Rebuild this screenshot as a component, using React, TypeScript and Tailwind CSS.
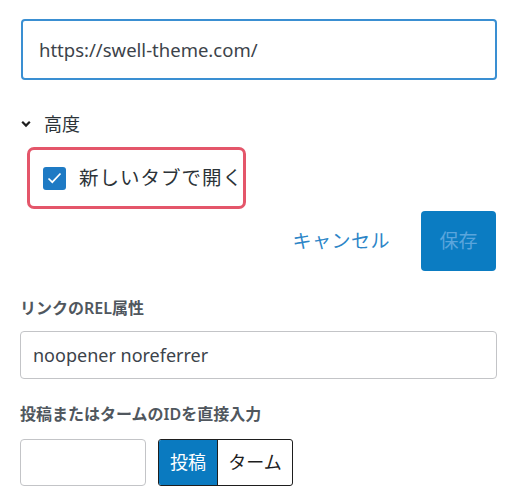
export default function App() {
  return (
    <div
      className="w-[509px] h-[497px] bg-white overflow-hidden pt-[19px] pl-[20px] text-[#3c434a]"
      style={{ fontFamily: '"Noto Sans", "Noto Sans CJK JP", sans-serif' }}
    >
      {/* URL入力 */}
      <div className="ml-px w-[476px] h-[61px] border-2 border-[#3a8fd2] rounded-[4px] pl-[16px] flex items-center text-[18.5px] text-[#3c434a]">
        https://swell-theme.com/
      </div>

      {/* 高度 */}
      <div className="mt-[31px] flex items-center h-[26px]">
        <svg width="10" height="8" viewBox="0 0 10 8" className="ml-px">
          <path d="M1.2 1.8 L5 5.6 L8.8 1.8" fill="none" stroke="#1e1e1e" strokeWidth="2.2" />
        </svg>
        <span className="ml-[13px] text-[18px] leading-[26px] text-[#2c3338]">高度</span>
      </div>

      {/* 新しいタブで開く */}
      <div className="mt-[10px] ml-[7px] w-[219px] h-[62px] border-[3px] border-[#e4566a] rounded-[7px] flex items-center pl-[13px]">
        <div className="w-[23px] h-[23px] rounded-[3px] bg-[#1e7ac4] flex items-center justify-center">
          <svg width="17" height="14" viewBox="0 0 17 14">
            <path d="M2.5 7.5 L6.3 11.2 L14.5 2.5" fill="none" stroke="white" strokeWidth="1.7" />
          </svg>
        </div>
        <span className="ml-[13px] text-[19.5px] text-[#2c3338] tracking-[1px]">新しいタブで開く</span>
      </div>

      {/* ボタン */}
      <div className="w-[476px] flex justify-end items-center mt-[2px]">
        <span className="text-[19px] text-[#2c85c7] tracking-[0.5px]">キャンセル</span>
        <div className="ml-[31px] w-[75px] h-[60px] rounded-[4px] bg-[#0b7cc2] flex items-center justify-center text-[19px] text-[#5aa5dc]">
          保存
        </div>
      </div>

      {/* REL属性 */}
      <div className="mt-[26px] text-[16px] font-semibold text-[#50575e] leading-[23px]">
        リンクのREL属性
      </div>
      <div className="mt-[11px] w-[477px] h-[48px] border-[1.5px] border-[#c3c4c7] rounded-[4px] pl-[12px] flex items-center text-[18px] text-[#3c434a]">
        noopener noreferrer
      </div>

      {/* ID直接入力 */}
      <div className="mt-[24px] text-[16px] font-semibold text-[#50575e] leading-[23px]">
        投稿またはタームのIDを直接入力
      </div>
      <div className="mt-[13px] flex items-center">
        <div className="w-[126px] h-[47px] border-[1.5px] border-[#c3c4c7] rounded-[4px]" />
        <div className="ml-[12px] h-[47px] flex border-[1.5px] border-[#1e1e1e] rounded-[3px] overflow-hidden">
          <div className="w-[58px] bg-[#0a7ac0] text-white flex items-center justify-center text-[18px]">
            投稿
          </div>
          <div className="w-[75px] border-l-[1.5px] border-[#1e1e1e] flex items-center justify-center text-[18px] text-[#1e1e1e]">
            ターム
          </div>
        </div>
      </div>
    </div>
  );
}
